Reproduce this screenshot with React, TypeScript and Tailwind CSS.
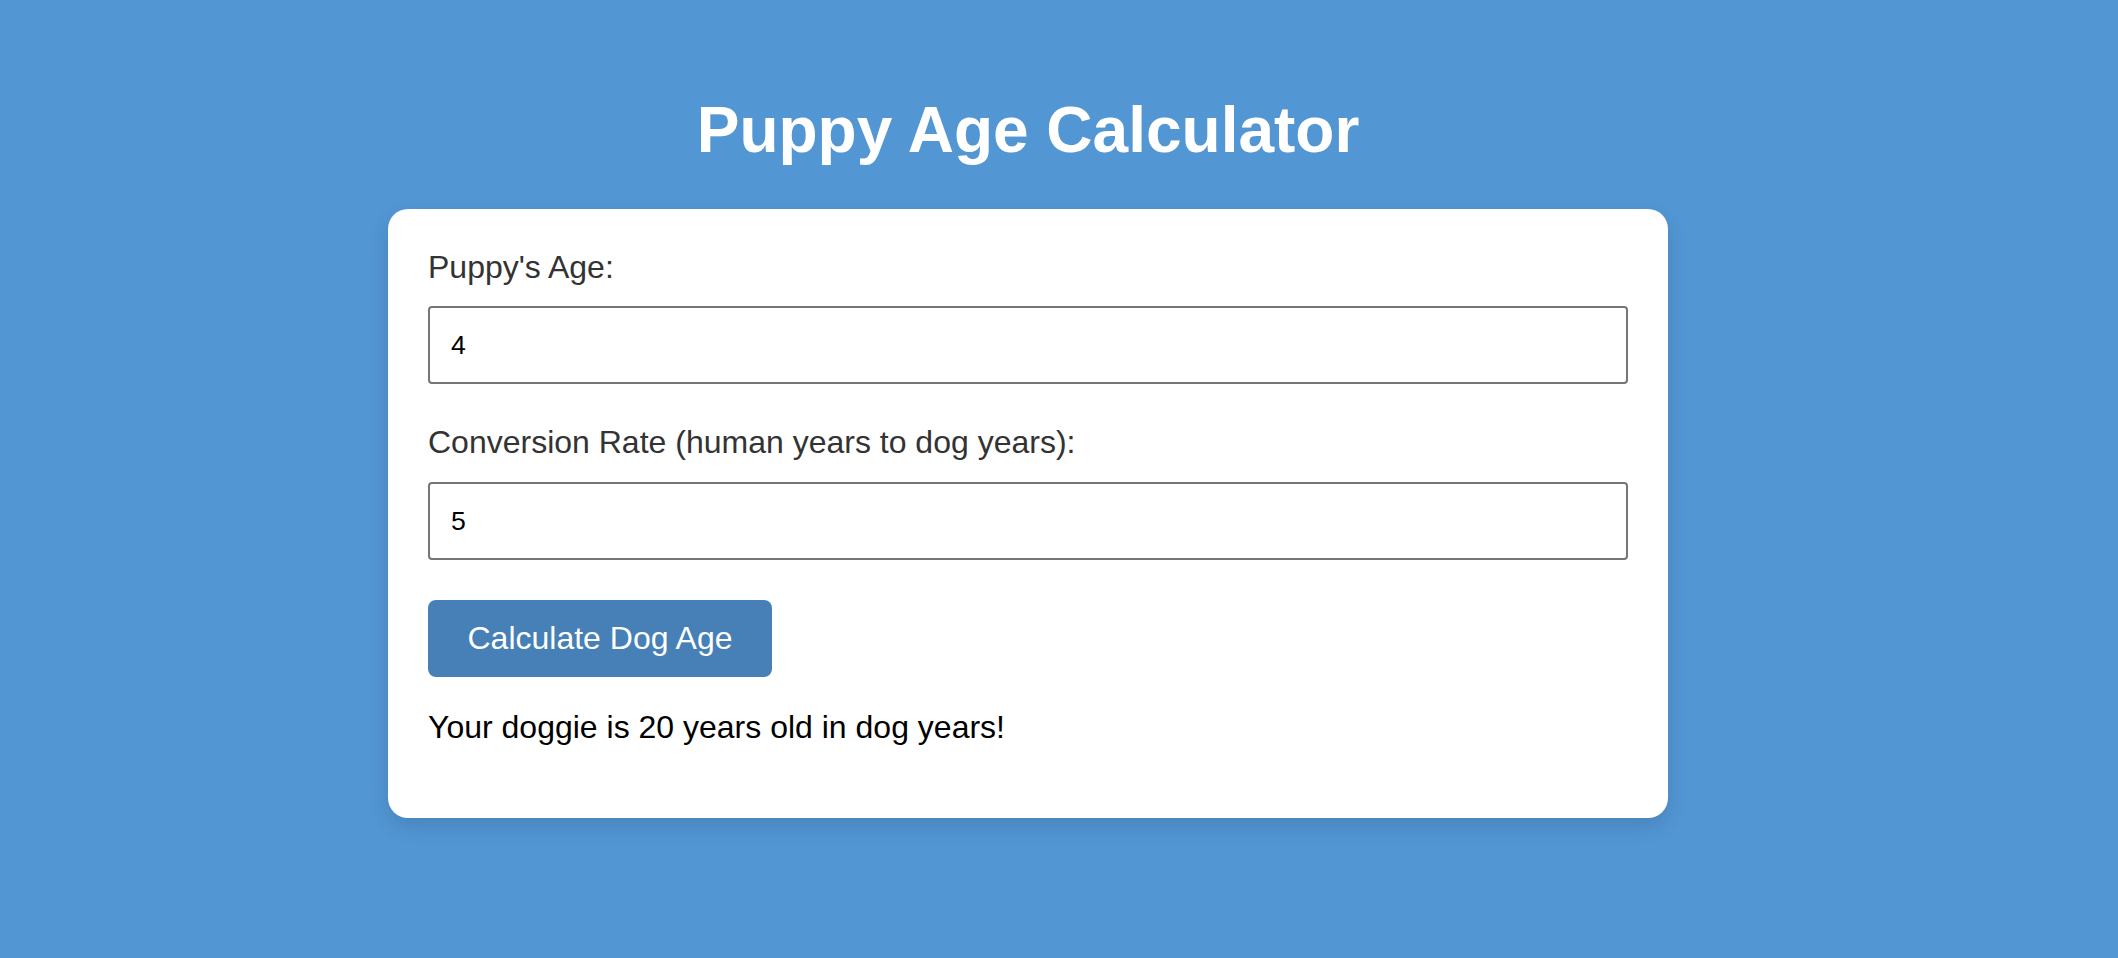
import { useState } from 'react';

export default function App() {
  const [age, setAge] = useState('4');
  const [rate, setRate] = useState('5');
  const [result, setResult] = useState('Your doggie is 20 years old in dog years!');

  const calculate = () => {
    const a = parseFloat(age);
    const r = parseFloat(rate);
    if (isNaN(a) || isNaN(r)) { setResult('Please enter valid numbers.'); return; }
    setResult(`Your doggie is ${a * r} years old in dog years!`);
  };

  return (
    <div className="min-h-screen bg-[#5296d4] pt-[94px] font-['Liberation_Sans',Arial,sans-serif]">
      <div className="ml-[388px] w-[1280px]">
        <h1 className="text-center text-[64px] font-bold leading-[73.6px] text-white">Puppy Age Calculator</h1>

        <div className="mt-[41px] rounded-[20px] bg-white p-[40px] shadow-[0_8px_20px_rgba(0,0,0,0.12)]">
          <label className="block text-[32px] leading-[36.8px] text-[#333]">Puppy's Age:</label>
          <input
            type="text"
            value={age}
            onChange={(e) => setAge(e.target.value)}
            className="mt-[21px] h-[78px] w-full rounded-[4px] border-2 border-[#767676] px-[21px] text-[26.67px] text-black outline-none"
          />

          <label className="mt-[40px] block text-[32px] leading-[36.8px] text-[#333]">
            Conversion Rate (human years to dog years):
          </label>
          <input
            type="text"
            value={rate}
            onChange={(e) => setRate(e.target.value)}
            className="mt-[21px] h-[78px] w-full rounded-[4px] border-2 border-[#767676] px-[21px] text-[26.67px] text-black outline-none"
          />

          <button
            onClick={calculate}
            className="mt-[40px] block h-[77px] w-[344px] rounded-[8px] bg-[#4680b6] text-[32px] leading-[36.8px] text-white"
          >
            Calculate Dog Age
          </button>

          <p className="mt-[32px] mb-[32px] text-[32px] leading-[36.8px] text-black">{result}</p>
        </div>
      </div>
    </div>
  );
}
